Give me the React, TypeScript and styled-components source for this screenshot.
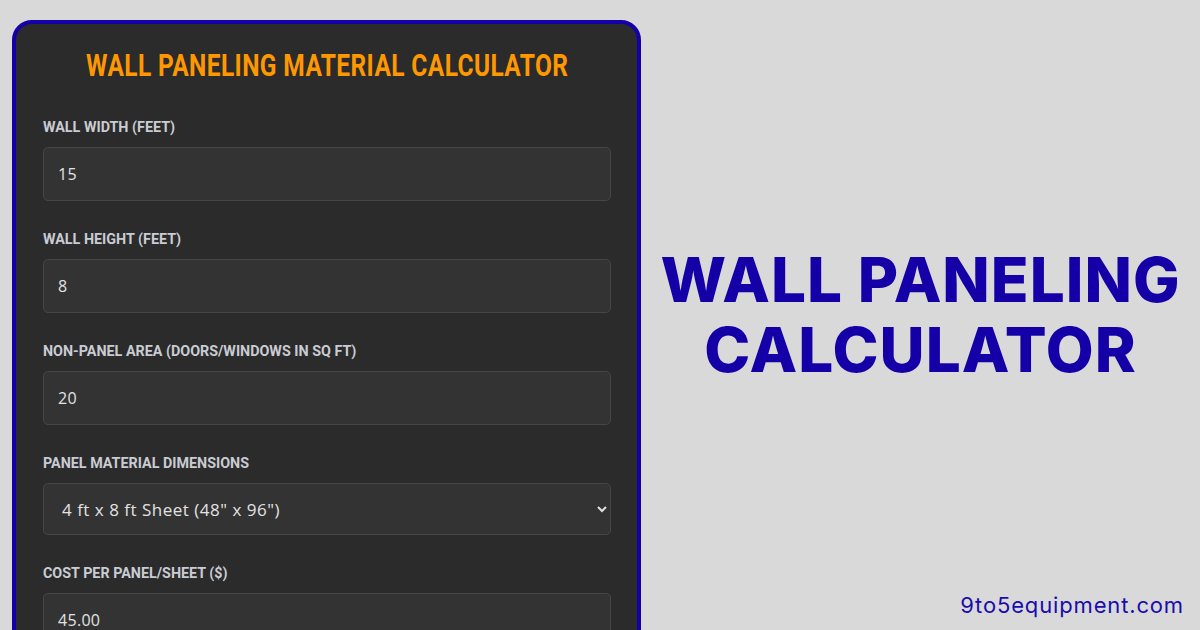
import React from "react";
import styled, { createGlobalStyle } from "styled-components";

const Global = createGlobalStyle`
  html, body { margin: 0; padding: 0; background: #d9d9d9; }
  body { width: 1200px; height: 630px; overflow: hidden; }
  * { box-sizing: border-box; }
`;

const Page = styled.div`
  width: 1200px;
  height: 630px;
  display: flex;
  overflow: hidden;
  background: #d9d9d9;
`;

const LeftCol = styled.div`
  padding: 20px 0 0 12px;
  width: 641px;
  flex: none;
`;

const Card = styled.div`
  width: 629px;
  height: 680px;
  background: #2b2b2b;
  border: 4px solid #1500a8;
  border-radius: 20px;
  padding: 24px 26px 0 27px;
`;

const TitleRow = styled.h1`
  margin: 0 0 35px;
  height: 36px;
  display: flex;
  justify-content: center;
  white-space: nowrap;
`;

const TitleText = styled.span`
  display: inline-block;
  color: #ff9800;
  font-family: "Roboto", sans-serif;
  font-weight: 700;
  font-size: 31px;
  line-height: 36px;
  letter-spacing: 0.5px;
  transform: scaleX(0.79);
  transform-origin: center;
`;

const Field = styled.div`
  display: flex;
  flex-direction: column;
  align-items: flex-start;
  gap: 12px;
  margin-bottom: 30px;
`;

const Label = styled.label`
  display: inline-block;
  color: #c9ccd3;
  font-family: "Roboto", sans-serif;
  font-weight: 700;
  font-size: 15px;
  line-height: 16px;
  white-space: nowrap;
  transform: scaleX(0.955);
  transform-origin: left center;
`;

const Input = styled.input`
  height: 54px;
  width: 100%;
  background: #333333;
  border: 1px solid #464646;
  border-radius: 5px;
  padding: 0 14px;
  color: #e2e2e2;
  font-family: "Open Sans", sans-serif;
  font-size: 16px;
  letter-spacing: 0.3px;
  outline: none;
`;

const Select = styled.select`
  height: 52px;
  width: 100%;
  background: #333333;
  border: 1px solid #464646;
  border-radius: 5px;
  padding: 0 10px 0 14px;
  color: #e2e2e2;
  font-family: "Open Sans", sans-serif;
  font-size: 17px;
  letter-spacing: 0.5px;
  color-scheme: dark;
  outline: none;
`;

const RightCol = styled.div`
  flex: 1;
  display: grid;
  grid-template-rows: 1fr auto 1fr;
  padding: 0 16px 0 16px;
`;

const Heading = styled.h2`
  grid-row: 2;
  margin: 0;
  text-align: center;
  color: #1500a8;
  font-family: "Inter", sans-serif;
  font-weight: 800;
  font-size: 62px;
  line-height: 70px;
  letter-spacing: 1px;
`;

const Footer = styled.div`
  grid-row: 3;
  align-self: end;
  justify-self: end;
  margin-bottom: 12px;
  color: #1a0dab;
  font-family: "Inter", sans-serif;
  font-size: 22px;
  letter-spacing: 0.85px;
`;

const fields = [
  { label: "Wall Width (Feet)", value: "15" },
  { label: "Wall Height (Feet)", value: "8" },
  { label: "Non-Panel Area (Doors/Windows in sq ft)", value: "20" },
];

export default function App() {
  return (
    <Page>
      <Global />
      <LeftCol>
        <Card>
          <TitleRow>
            <TitleText>WALL PANELING MATERIAL CALCULATOR</TitleText>
          </TitleRow>
          {fields.map((f) => (
            <Field key={f.label}>
              <Label>{f.label.toUpperCase()}</Label>
              <Input defaultValue={f.value} />
            </Field>
          ))}
          <Field>
            <Label>PANEL MATERIAL DIMENSIONS</Label>
            <Select defaultValue="4x8">
              <option value="4x8">4 ft x 8 ft Sheet (48" x 96")</option>
              <option value="4x10">4 ft x 10 ft Sheet (48" x 120")</option>
            </Select>
          </Field>
          <Field>
            <Label>COST PER PANEL/SHEET ($)</Label>
            <Input defaultValue="45.00" />
          </Field>
        </Card>
      </LeftCol>
      <RightCol>
        <Heading>
          WALL PANELING
          <br />
          CALCULATOR
        </Heading>
        <Footer>9to5equipment.com</Footer>
      </RightCol>
    </Page>
  );
}
